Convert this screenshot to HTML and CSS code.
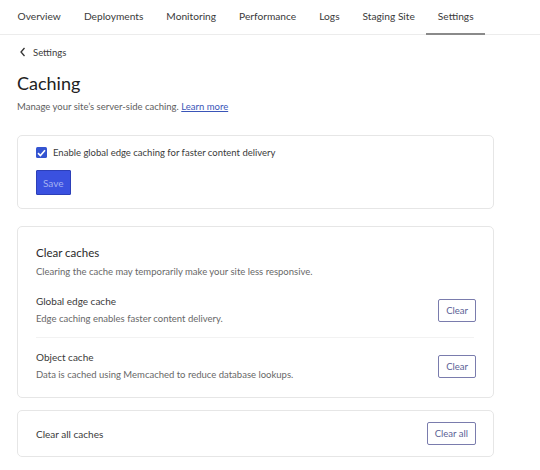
FILE: index.html
```html
<!DOCTYPE html>
<html lang="en">
<head>
<meta charset="utf-8">
<link rel="stylesheet" href="styles.css">
</head>
<body>
<nav class="tabs">
  <a class="tab">Overview</a>
  <a class="tab">Deployments</a>
  <a class="tab">Monitoring</a>
  <a class="tab">Performance</a>
  <a class="tab">Logs</a>
  <a class="tab">Staging Site</a>
  <a class="tab active">Settings</a>
</nav>
<main class="page">
  <a class="back">
    <svg class="chev" width="8" height="10" viewBox="0 0 8 10"><path d="M5.5 1 L2 5 L5.5 9" fill="none" stroke="#333" stroke-width="1.3"/></svg>
    <span>Settings</span>
  </a>
  <h1 class="title">Caching</h1>
  <p class="lead">Manage your site’s server-side caching. <a class="link">Learn more</a></p>

  <section class="card card-edge">
    <label class="check">
      <span class="box"><svg width="9" height="8" viewBox="0 0 9 8"><path d="M1 4.2 L3.4 6.5 L8 1.2" fill="none" stroke="#fff" stroke-width="1.6"/></svg></span>
      <span>Enable global edge caching for faster content delivery</span>
    </label>
    <button class="btn-primary">Save</button>
  </section>

  <section class="card card-clear">
    <h2 class="card-title">Clear caches</h2>
    <p class="muted">Clearing the cache may temporarily make your site less responsive.</p>
    <div class="row">
      <div class="row-text">
        <div class="row-title">Global edge cache</div>
        <div class="muted">Edge caching enables faster content delivery.</div>
      </div>
      <button class="btn-outline">Clear</button>
    </div>
    <div class="divider"></div>
    <div class="row row-last">
      <div class="row-text">
        <div class="row-title">Object cache</div>
        <div class="muted">Data is cached using Memcached to reduce database lookups.</div>
      </div>
      <button class="btn-outline">Clear</button>
    </div>
  </section>

  <section class="card card-all">
    <div class="row-title">Clear all caches</div>
    <button class="btn-outline">Clear all</button>
  </section>
</main>
</body>
</html>
```
FILE: styles.css
```css
* { box-sizing: border-box; }
html, body { margin: 0; padding: 0; background: #fff; }
body {
  font-family: "Lato", "Noto Sans", sans-serif;
  color: #333;
  width: 540px;
}
.tabs {
  display: flex;
  height: 35px;
  border-bottom: 1px solid #ececec;
  padding-left: 6px;
}
.tab {
  display: flex;
  align-items: center;
  padding: 0 11.5px 1px;
  font-size: 10.2px;
  color: #3a3a3a;
  border-bottom: 2px solid transparent;
  margin-bottom: -1px;
}
.tab.active { border-bottom-color: #8a8a8a; }
.page {
  padding: 0 46px 0 17px;
}
.back {
  display: flex;
  align-items: center;
  gap: 6px;
  height: 34px;
  padding-left: 2px;
  font-size: 9.5px;
  color: #3a3a3a;
}
.chev { display: block; }
.title {
  margin: 2px 0 0;
  font-size: 18px;
  font-weight: 400;
  line-height: 24px;
  color: #222;
}
.lead {
  margin: 5px 0 0;
  font-size: 9.5px;
  line-height: 14px;
  color: #606060;
}
.link { color: #3a55b8; text-decoration: underline; }
.card {
  border: 1px solid #e6e6e6;
  border-radius: 5px;
  background: #fff;
}
.card-edge {
  margin-top: 21px;
  padding: 11px 18px 13px;
}
.check {
  display: flex;
  align-items: center;
  gap: 6px;
  font-size: 9.5px;
  color: #3a3a3a;
}
.box {
  width: 11px; height: 11px;
  background: #3454d1;
  border-radius: 1.5px;
  display: flex; align-items: center; justify-content: center;
}
.btn-primary {
  margin-top: 12px;
  display: block;
  height: 25px;
  padding: 0 6px;
  background: #3a51e0;
  border: 1px solid #2c3fb8;
  color: #a3b0f2;
  font-family: inherit;
  font-size: 10px;
  border-radius: 1px;
}
.card-clear {
  margin-top: 17px;
  padding: 18px 17px 0 18px;
}
.card-title {
  margin: 0;
  font-size: 11.5px;
  font-weight: 400;
  line-height: 16px;
  color: #2a2a2a;
}
.muted {
  font-size: 9.5px;
  color: #686868;
  line-height: 14px;
}
.card-clear > .muted { margin: 4px 0 0; }
.row {
  display: flex;
  align-items: center;
  justify-content: space-between;
  margin-top: 15px;
  padding-bottom: 11px;
}
.row-title {
  font-size: 10px;
  color: #3a3a3a;
  line-height: 14px;
}
.row-text .muted { margin-top: 4px; }
.divider {
  height: 1px;
  background: #f2f2f2;
  margin-right: 2px;
}
.row-last { margin-top: 12px; padding-bottom: 15px; }
.btn-outline {
  height: 23px;
  padding: 0 7px;
  background: #fff;
  border: 1px solid #7a7cad;
  border-radius: 2px;
  color: #5b5f96;
  font-family: inherit;
  font-size: 9.5px;
}
.card-all {
  margin-top: 12px;
  display: flex;
  align-items: center;
  justify-content: space-between;
  padding: 11px 17px 11px 18px;
}
```
